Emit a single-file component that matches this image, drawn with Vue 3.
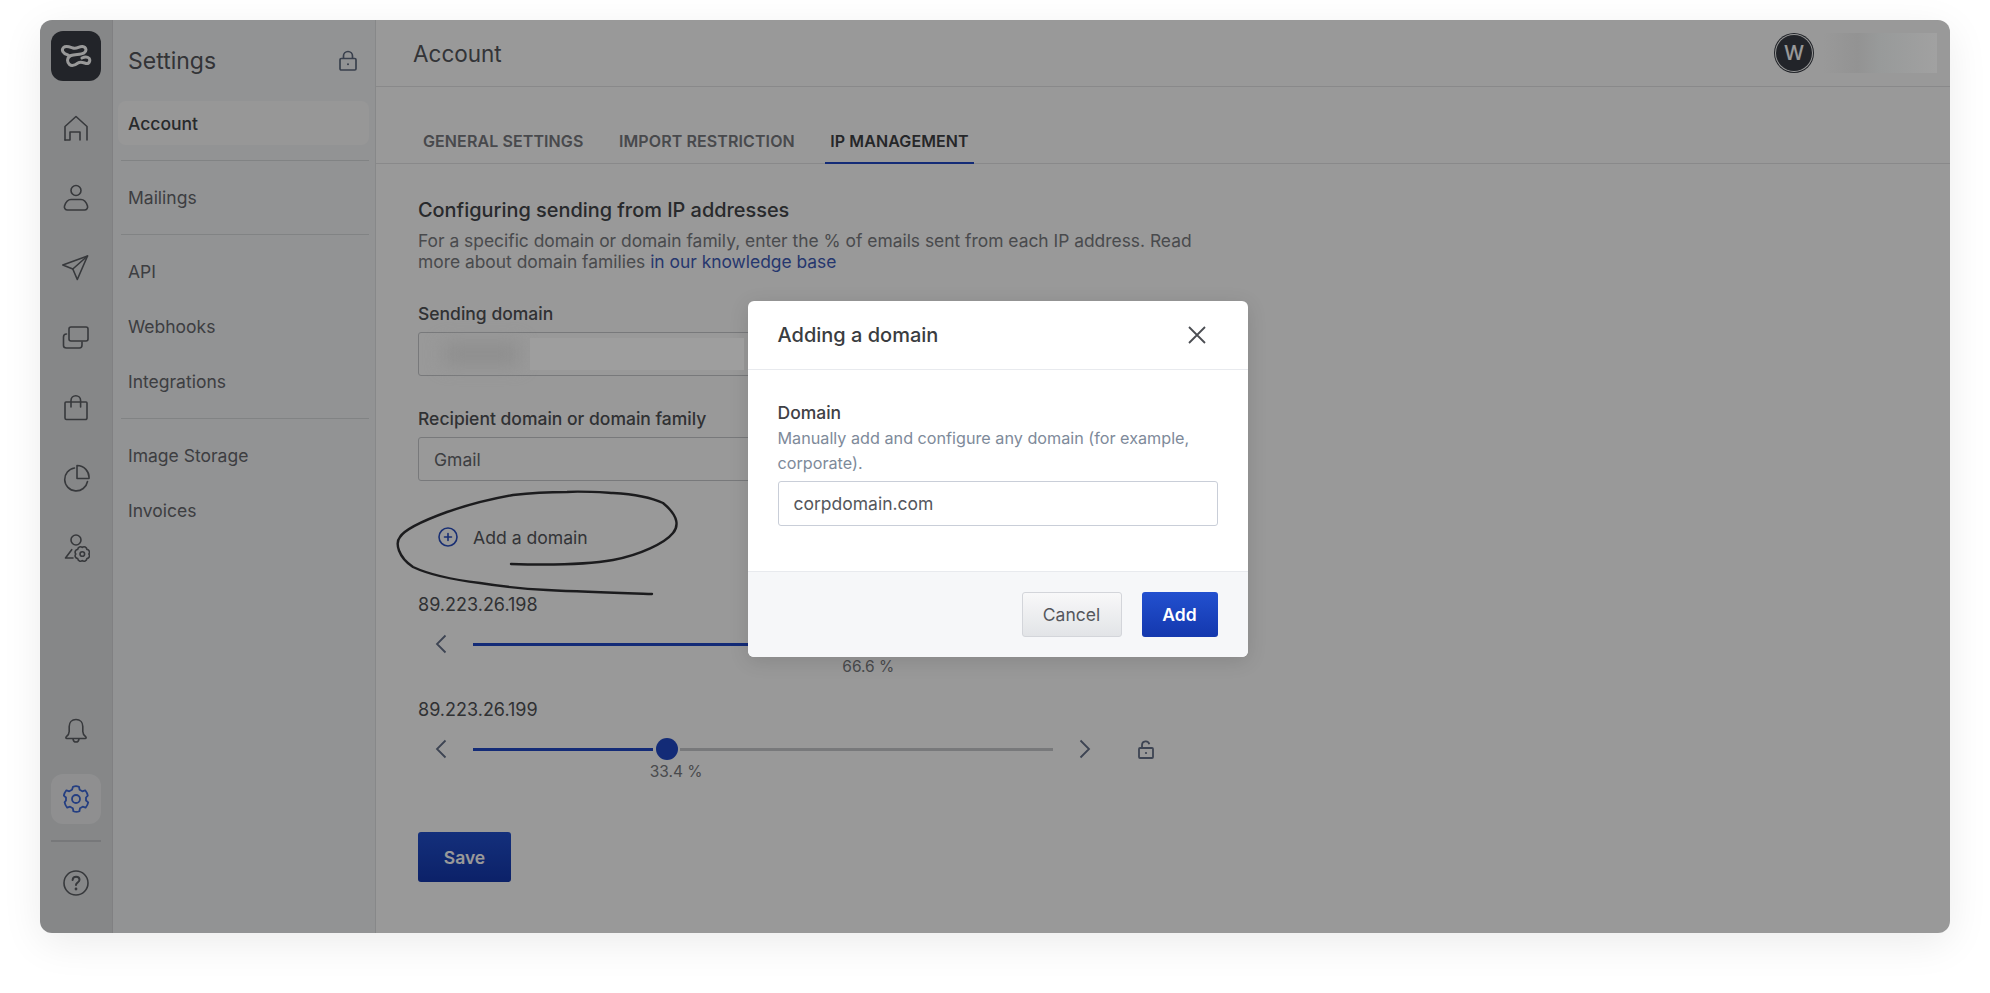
<template>
  <div class="page">
    <div class="window">
      <nav class="rail">
        <div class="logo">
          <svg width="32" height="32" viewBox="0 0 32 32" fill="none" stroke="#fff" stroke-width="3" stroke-linecap="round">
            <path d="M8 15C3 14 1 10 3.500 7.500C6 5 10 7 13 8C17 9.500 19 6 22.500 6.500C26.500 7 27 11 24 13C21 15 15 14 11 15.500C7 17 6.500 22 9.500 24.500C12.500 27 16 24.500 18 23C21 21 24 23 26 23.500C30 24 31 19 28 17.500C26.500 16.800 24 17 22 18" />
          </svg>
        </div>
        <div class="rail-item" v-for="(icon, i) in topIcons" :key="i">
          <svg width="28" height="28" viewBox="0 0 28 28" fill="none" stroke="currentColor" stroke-width="1.600" stroke-linecap="round" stroke-linejoin="round">
            <path v-for="d in icon" :key="d" :d="d" />
          </svg>
        </div>
        <div class="rail-spacer"></div>
        <div class="rail-item bell">
          <svg width="28" height="28" viewBox="0 0 28 28" fill="none" stroke="currentColor" stroke-width="1.600" stroke-linecap="round" stroke-linejoin="round">
            <path d="M14 2.500c-4.200 0-6.800 3-6.800 7v5c0 2.500-1.300 4-3 5.400-.7.600-.3 1.600.6 1.600h18.400c.9 0 1.300-1 .6-1.600-1.700-1.400-3-2.900-3-5.400v-5c0-4-2.600-7-6.800-7z" />
            <path d="M11 21.800c.3 2 1.500 3.200 3 3.200s2.700-1.200 3-3.200" />
          </svg>
        </div>
        <div class="rail-item active">
          <svg width="28" height="28" viewBox="0 0 28 28" fill="none" stroke="currentColor" stroke-width="1.800" stroke-linecap="round" stroke-linejoin="round">
            <circle cx="14" cy="14" r="4" />
            <path d="M11 2.800c1.800-.8 4.200-.8 6 0l.6 3 2.700 1.500 2.900-1c1.200 1.500 2.300 3.500 2.600 5.300L24 13.500v3l2.200 1.900c-.3 1.800-1.400 3.800-2.600 5.300l-2.900-1-2.700 1.500-.6 3c-1.800.8-4.200.8-6 0l-.6-3-2.700-1.500-2.900 1c-1.200-1.500-2.300-3.500-2.600-5.300L4 16.500v-3l-2.200-1.900c.3-1.800 1.400-3.800 2.600-5.300l2.900 1 2.700-1.500z" transform="translate(0 -1)" />
          </svg>
        </div>
        <div class="rail-line"></div>
        <div class="rail-item">
          <svg width="28" height="28" viewBox="0 0 28 28" fill="none" stroke="currentColor" stroke-width="1.600" stroke-linecap="round" stroke-linejoin="round">
            <circle cx="14" cy="14" r="12" />
            <path d="M10.600 11c.2-2 1.600-3.300 3.500-3.300 2 0 3.400 1.300 3.400 3 0 2.800-3.500 2.800-3.500 5.300" stroke-width="2" />
            <circle cx="14" cy="20" r=".6" stroke-width="1.600" />
          </svg>
        </div>
      </nav>

      <aside class="sidebar">
        <div class="sidebar-head">
          <span class="sidebar-title">Settings</span>
          <svg width="20" height="22" viewBox="0 0 20 22" fill="none" stroke="#5f6b80" stroke-width="1.700">
            <rect x="2" y="8.500" width="16" height="11.500" rx="1.200" />
            <path d="M5.500 8.500V6a4.500 4.500 0 0 1 9 0v2.500" />
            <circle cx="10" cy="14.200" r="1" fill="#5f6b80" stroke="none" />
          </svg>
        </div>
        <div class="side-group" v-for="(group, i) in menu" :key="i">
          <div class="side-item" v-for="item in group" :key="item" :class="{ current: item === 'Account' }">{{ item }}</div>
        </div>
      </aside>

      <main class="main">
        <header class="topbar">
          <div class="topbar-title">Account</div>
          <div class="user">
            <div class="avatar">W</div>
            <div class="user-blur"></div>
          </div>
        </header>
        <div class="tabs">
          <div class="tab" v-for="t in tabs" :key="t" :class="{ selected: t === 'IP MANAGEMENT' }">{{ t }}</div>
        </div>
        <section class="content">
          <h2>Configuring sending from IP addresses</h2>
          <p class="lead">
            <span class="lead-line">For a specific domain or domain family, enter the % of emails sent from each IP address. Read</span>
            <span class="lead-line">more about domain families <a>in our knowledge base</a></span>
          </p>
          <label class="field-label first">Sending domain</label>
          <div class="field blurred"><span class="blur-a"></span><span class="blur-b"></span></div>
          <label class="field-label">Recipient domain or domain family</label>
          <div class="field">Gmail</div>
          <div class="add-row">
            <svg width="20" height="20" viewBox="0 0 20 20" fill="none" stroke="#2a4fc0" stroke-width="1.600" stroke-linecap="round">
              <circle cx="10" cy="10" r="9" />
              <path d="M10 6.500v7M6.500 10h7" />
            </svg>
            <span>Add a domain</span>
          </div>
          <div class="ip" v-for="s in sliders" :key="s.ip">
            <div class="ip-addr">{{ s.ip }}</div>
            <div class="slider-row">
              <svg class="chev" width="12" height="20" viewBox="0 0 12 20" fill="none" stroke="#66728a" stroke-width="1.800"><path d="M10.500 1.500 2 10l8.500 8.500" /></svg>
              <div class="track">
                <div class="fill" :style="{ width: `calc(${s.value}% - 14px)` }"></div>
                <div class="rest" :style="{ left: `calc(${s.value}% + 13px)` }"></div>
                <div class="thumb" :style="{ left: s.value + '%' }"></div>
                <div class="pct" :style="{ left: s.value + '%' }">{{ s.value }} %</div>
              </div>
              <svg class="chev" width="12" height="20" viewBox="0 0 12 20" fill="none" stroke="#66728a" stroke-width="1.800"><path d="M1.500 1.500 10 10l-8.500 8.500" /></svg>
              <svg class="unlock" width="16" height="19" viewBox="0 0 16 19" fill="none" stroke="#66728a" stroke-width="1.800">
                <rect x="1" y="8" width="14" height="10" rx="1" />
                <path d="M4 8V5a3.700 3.700 0 0 1 7.300-.8" />
                <circle cx="8" cy="13" r="1.100" fill="#66728a" stroke="none" />
              </svg>
            </div>
          </div>
          <button class="btn-primary save" type="button">Save</button>
        </section>
      </main>

      <div class="overlay">
        <div class="modal" role="dialog" aria-modal="true">
          <div class="modal-header">
            <span class="modal-title">Adding a domain</span>
            <svg width="20" height="20" viewBox="0 0 20 20" fill="none" stroke="#4b4d52" stroke-width="1.800"><path d="M2 2l16 16M18 2 2 18" /></svg>
          </div>
          <div class="modal-body">
            <div class="modal-label">Domain</div>
            <div class="modal-help">Manually add and configure any domain (for example, corporate).</div>
            <div class="modal-input">corpdomain.com</div>
          </div>
          <div class="modal-footer">
            <button class="btn-cancel" type="button">Cancel</button>
            <button class="btn-primary add" type="button">Add</button>
          </div>
        </div>
      </div>

      <svg class="scribble" width="290" height="115" viewBox="0 0 290 115" fill="none" stroke="#1c1c1e" stroke-width="2.400" stroke-linecap="round">
        <path d="M121 79C155 80 195 80 223 75C250 70 275 58 283 48C288 42 290 32 273 18C258 11 240 9 223 8C205 7 190 6 177 7C155 7 140 8 123 10C100 14 80 19 57 27C35 35 15 44 10 52C5 58 8 72 23 82C40 90 65 95 90 98C115 102 135 104 157 105C195 107 230 108 262 109" />
      </svg>
    </div>
  </div>
</template>

<script setup>
const topIcons = [
  ["M3 26V12.500L14 2.500l11 10V26", "M3 26h5v-8h10v8"],
  ["M14 1.500a5 5 0 1 1 0 10 5 5 0 0 1 0-10z", "M9 15.500h10c3 0 5.500 3.500 6.500 6.500.6 2-.8 4-3 4H5.500c-2.200 0-3.600-2-3-4 1-3 3.500-6.500 6.500-6.500z"],
  ["M25.500 2 .8 11l10 4 4.500 10.500z", "M25.500 2 10.800 15"],
  ["M9 3h15a2 2 0 0 1 2 2v10a2 2 0 0 1-2 2H9a2 2 0 0 1-2-2V5a2 2 0 0 1 2-2z", "M4.500 10C3 10 1.500 11 1.500 13v8.500c0 1.700 1.300 2.500 3 2.500h13c1.700 0 2.500-1.300 2.500-3v-3"],
  ["M4 8h20a1 1 0 0 1 1 1v15a1.500 1.500 0 0 1-1.500 1.500h-19A1.500 1.500 0 0 1 3 24V9a1 1 0 0 1 1-1z", "M9 13V6.500a4.800 4.800 0 0 1 9.600 0V13"],
  ["M12.500 4A11.500 11.500 0 1 0 25.500 17.500", "M15 1.500a12 12 0 0 1 12 13H15z"],
  ["M14 1a5 5 0 1 1 0 10 5 5 0 0 1 0-10z", "M9.700 15.700 3.500 24H11", "M20.300 13.500A2.800 2.800 0 0 1 24.900 15.400A2.800 2.800 0 0 1 26.800 20A2.800 2.800 0 0 1 24.900 24.600A2.800 2.800 0 0 1 20.300 26.500A2.800 2.800 0 0 1 15.700 24.600A2.800 2.800 0 0 1 13.800 20A2.800 2.800 0 0 1 15.700 15.400A2.800 2.800 0 0 1 20.300 13.500z", "M20.300 17.700a2.300 2.300 0 1 1 0 4.600 2.300 2.300 0 0 1 0-4.600z"],
];

const menu = [
  ["Account"],
  ["Mailings"],
  ["API", "Webhooks", "Integrations"],
  ["Image Storage", "Invoices"],
];

const tabs = ["GENERAL SETTINGS", "IMPORT RESTRICTION", "IP MANAGEMENT"];

const sliders = [
  { ip: "89.223.26.198", value: 66.6 },
  { ip: "89.223.26.199", value: 33.4 },
];
</script>

<style>
html,
body {
  margin: 0;
  background: #fff;
}
</style>

<style scoped>
.page {
  height: 993px;
  box-sizing: border-box;
  padding: 20px 40px 60px;
  font-family: Inter, "Liberation Sans", sans-serif;
  color: #4b4d52;
}
.window {
  position: relative;
  display: flex;
  height: 913px;
  background: #fff;
  border-radius: 12px;
  overflow: hidden;
  box-shadow: 0 10px 40px rgba(0, 0, 0, 0.08);
}
.rail {
  width: 73px;
  flex: none;
  box-sizing: border-box;
  padding: 11px 0 0 11px;
  background: #e0e1e3;
  border-right: 1px solid #d5d6d9;
  display: flex;
  flex-direction: column;
  color: #5c5f64;
}
.logo {
  width: 50px;
  height: 50px;
  border-radius: 12px;
  background: #393d45;
  display: flex;
  align-items: center;
  justify-content: center;
  margin-bottom: 22px;
}
.rail-item {
  width: 50px;
  height: 50px;
  margin-bottom: 20px;
  border-radius: 12px;
  display: flex;
  align-items: center;
  justify-content: center;
}
.rail-spacer {
  flex: 1;
}
.rail-item.bell {
  margin-bottom: 18px;
}
.rail-item.active {
  background: #eeeff1;
  color: #3d68d8;
  margin-bottom: 16px;
}
.rail-line {
  width: 50px;
  height: 2px;
  background: #c6c8cc;
  margin-bottom: 16px;
}
.rail > .rail-item:last-child {
  margin-bottom: 25px;
}
.sidebar {
  width: 263px;
  flex: none;
  box-sizing: border-box;
  background: #f4f5f7;
  border-right: 1px solid #e2e3e5;
  padding: 0 6px 0 5px;
}
.sidebar-head {
  height: 81px;
  display: flex;
  align-items: center;
  justify-content: space-between;
  padding: 0 11px 0 10px;
}
.sidebar-title {
  font-size: 23px;
  color: #55575c;
}
.side-group {
  padding-bottom: 15px;
  margin-bottom: 14px;
  border-bottom: 1px solid #d8dadd;
  margin-left: 3px;
  display: flex;
  flex-direction: column;
  gap: 11px;
}
.side-group:last-child {
  border-bottom: none;
}
.side-item {
  height: 44px;
  margin-left: -3px;
  padding-left: 10px;
  display: flex;
  align-items: center;
  font-size: 17.500px;
  border-radius: 8px;
  color: #66686d;
}
.side-item.current {
  background: #fcfcfc;
  color: #44464a;
  font-weight: 500;
}
.main {
  flex: 1;
  min-width: 0;
}
.topbar {
  height: 67px;
  box-sizing: border-box;
  border-bottom: 1px solid #e4e5e7;
  display: flex;
  align-items: center;
  justify-content: space-between;
  padding: 0 13px 0 37px;
}
.topbar-title {
  font-size: 22.500px;
  color: #55575c;
}
.user {
  display: flex;
  align-items: center;
  gap: 11px;
}
.avatar {
  width: 36px;
  height: 36px;
  border-radius: 50%;
  background: #393d45;
  color: #fff;
  display: flex;
  align-items: center;
  justify-content: center;
  font-size: 20px;
  font-weight: 500;
  box-shadow: 0 0 0 1px #fff, 0 0 0 2px #393d45;
}
.user-blur {
  position: relative;
  z-index: 2;
  width: 114px;
  height: 40px;
  background: linear-gradient(90deg, #999 0%, #939393 30%, #989a9a 50%, #a1a1a1 100%);
}
.tabs {
  height: 77px;
  box-sizing: border-box;
  border-bottom: 1px solid #e4e5e7;
  padding: 31px 0 0 42px;
  display: flex;
  gap: 25.500px;
}
.tab {
  height: 46px;
  padding: 0 5px;
  box-sizing: border-box;
  display: flex;
  align-items: center;
  font-size: 16px;
  font-weight: 600;
  letter-spacing: 0.1px;
  color: #787a7f;
}
.tab.selected {
  color: #3f4145;
  border-bottom: 2px solid #2049c6;
  padding-top: 2px;
}
.content {
  padding: 34px 0 0 42px;
  width: 800px;
}
h2 {
  margin: 0;
  font-size: 19.900px;
  line-height: 24px;
  font-weight: 500;
  color: #44464a;
}
.lead {
  margin: 8px 0 0;
  width: 780px;
  font-size: 17.400px;
  line-height: 21px;
  color: #7a7c81;
}
.lead-line {
  display: block;
}
.lead a {
  color: #3f5db8;
}
.field-label {
  display: block;
  margin-top: 32px;
  font-size: 17.500px;
  line-height: 22px;
  font-weight: 500;
  color: #505256;
}
.field-label.first {
  margin-top: 31px;
}
.field {
  margin-top: 7px;
  width: 640px;
  height: 44px;
  box-sizing: border-box;
  border: 1px solid #c9cacd;
  border-radius: 3px;
  padding: 0 15px;
  display: flex;
  align-items: center;
  font-size: 17.500px;
  color: #66686d;
}
.blurred {
  padding: 0;
}
.blur-a {
  position: relative;
  z-index: 2;
  width: 75px;
  height: 22px;
  margin-left: 25px;
  background: #8e8e8e;
  filter: blur(9px);
}
.blur-b {
  position: relative;
  z-index: 2;
  flex: none;
  width: 214px;
  height: 32px;
  margin-left: 11px;
  background: #9e9e9e;
}
.add-row {
  margin-top: 45px;
  margin-left: 20px;
  height: 22px;
  display: flex;
  align-items: center;
  gap: 15px;
  font-size: 17.600px;
  color: #55575c;
}
.ip-addr {
  margin-top: 46px;
  font-size: 18px;
  line-height: 22px;
  color: #505256;
}
.ip + .ip .ip-addr {
  margin-top: 0;
}
.slider-row {
  margin-top: 16px;
  height: 24px;
  display: flex;
  align-items: center;
  padding-left: 17px;
  margin-bottom: 43px;
}
.chev {
  flex: none;
}
.track {
  position: relative;
  margin: 0 26px;
  width: 580px;
  height: 3px;
}
.fill {
  position: absolute;
  left: 0;
  top: 0;
  height: 3px;
  background: #2049c6;
}
.rest {
  position: absolute;
  top: 0;
  right: 0;
  height: 3px;
  background: #c8cacd;
}
.thumb {
  position: absolute;
  top: -10px;
  width: 22px;
  height: 22px;
  margin-left: -11px;
  border-radius: 50%;
  background: #2049c6;
}
.pct {
  position: absolute;
  top: 14px;
  transform: translateX(-17px);
  font-size: 15.500px;
  line-height: 20px;
  white-space: nowrap;
  color: #7a7c81;
}
.unlock {
  margin-left: 47px;
  flex: none;
}
.btn-primary {
  border: none;
  border-radius: 3px;
  background: linear-gradient(180deg, #2250cf, #1438ae);
  color: #fff;
  font-family: inherit;
  font-size: 17.500px;
  font-weight: 600;
}
.save {
  margin-top: 28px;
  width: 93px;
  height: 50px;
}
.overlay {
  position: absolute;
  z-index: 1;
  inset: 0;
  padding: 5px 0 0 5px;
  background: rgba(0, 0, 0, 0.4);
  display: grid;
  place-items: center;
}
.modal {
  width: 500px;
  height: 356px;
  background: #fff;
  border-radius: 6px;
  overflow: hidden;
  display: flex;
  flex-direction: column;
  box-shadow: 0 4px 20px rgba(0, 0, 0, 0.12);
}
.modal-header {
  height: 69px;
  flex: none;
  box-sizing: border-box;
  border-bottom: 1px solid #e8eaee;
  display: flex;
  align-items: center;
  justify-content: space-between;
  padding: 0 41px 0 30px;
}
.modal-title {
  font-size: 20px;
  font-weight: 500;
  color: #3a3c40;
}
.modal-body {
  flex: 1;
  padding: 32px 30px 0;
}
.modal-label {
  font-size: 17.500px;
  line-height: 22px;
  font-weight: 500;
  color: #3f4145;
}
.modal-help {
  font-size: 16.200px;
  line-height: 25px;
  margin-top: 2px;
  color: #7e8a9a;
}
.modal-input {
  margin-top: 5px;
  height: 45px;
  box-sizing: border-box;
  border: 1px solid #c9ced8;
  border-radius: 3px;
  padding: 0 15px;
  display: flex;
  align-items: center;
  font-size: 17.500px;
  color: #55575c;
}
.modal-footer {
  height: 86px;
  flex: none;
  box-sizing: border-box;
  background: #f6f7f9;
  border-top: 1px solid #e8eaee;
  display: flex;
  justify-content: flex-end;
  gap: 20px;
  padding: 20px 30px 0 0;
}
.btn-cancel {
  width: 100px;
  height: 45px;
  border: 1px solid #d3d5da;
  border-radius: 3px;
  background: linear-gradient(180deg, #f8f8f9, #e2e4e7);
  color: #55575c;
  font-family: inherit;
  font-size: 17.500px;
}
.add {
  width: 76px;
  height: 45px;
}
.scribble {
  position: absolute;
  z-index: 2;
  left: 350px;
  top: 465px;
}
</style>
